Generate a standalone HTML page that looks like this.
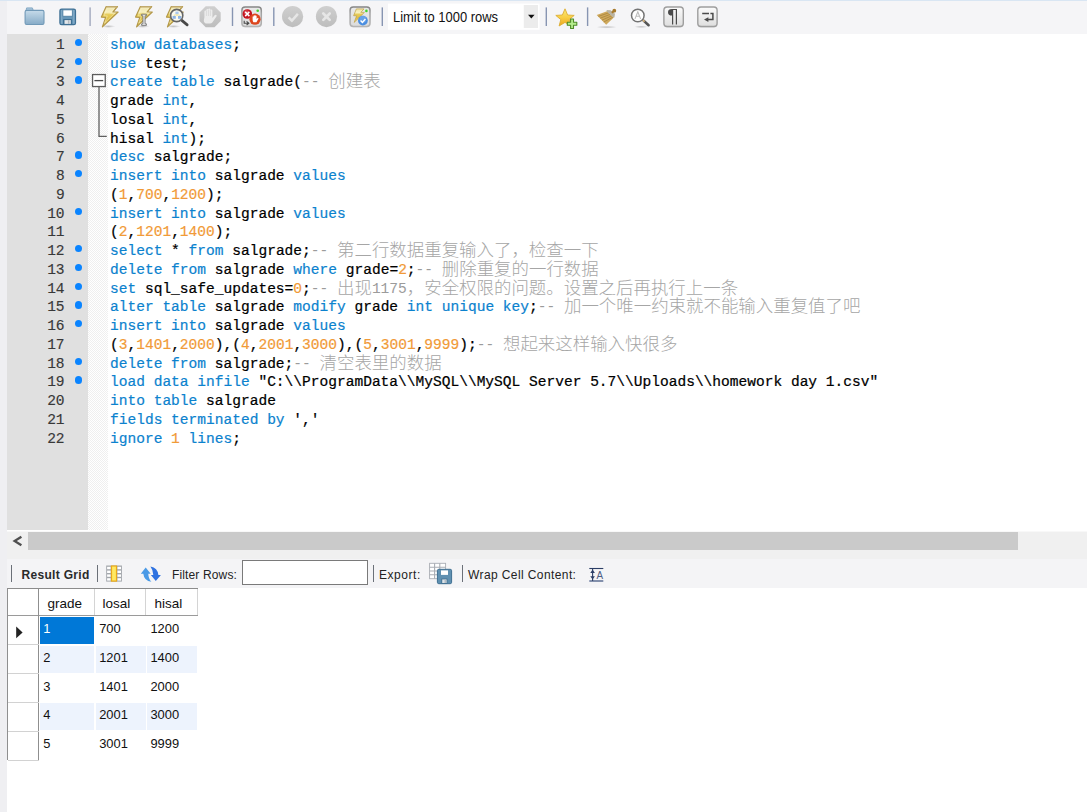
<!DOCTYPE html>
<html lang="zh"><head><meta charset="utf-8"><title>MySQL Workbench</title>
<style>
html,body{margin:0;padding:0}
body{width:1087px;height:812px;position:relative;overflow:hidden;background:#fff;font-family:"Liberation Sans","Noto Sans CJK SC",sans-serif;}
.abs{position:absolute}
#strip{left:0;top:0;width:7px;height:812px;background:#efeff2}
#tb{left:7px;top:0;width:1080px;height:34px;background:#f5f5f7}
#topline{left:0;top:0;width:1087px;height:1px;background:#d9e6f3}
#gutter{left:7px;top:34px;width:81px;height:496px;background:#e0e0e0}
#fold{left:88px;top:34px;width:20px;height:496px;background:#f7f7f7;background-image:conic-gradient(#fff 25%,#efefef 0 50%,#fff 0 75%,#efefef 0);background-size:2px 2px}
.ln{position:absolute;left:0;height:18.75px;line-height:18.75px;width:1087px;font-family:"Liberation Mono","Noto Sans CJK SC",monospace;font-size:14.56px;white-space:pre;color:#000}
.ln .no{position:absolute;right:1022.4px;top:1.8px;font-weight:normal;color:#383838;-webkit-text-stroke:0.15px #383838}
.ln .dot{position:absolute;left:74.8px;top:4.9px;width:7.3px;height:7.3px;border-radius:50%;background:#0a84ff}
.ln .code{position:absolute;left:110px;top:1.8px}
.k{color:#0b82ce;-webkit-text-stroke:0.2px #0b82ce}.i,.p,.s{color:#000;-webkit-text-stroke:0.22px #000}.n{color:#f19a37;-webkit-text-stroke:0.2px #f19a37}.c{color:#9b9b9b}
.z{color:#a6a6a6;font-size:17.45px;line-height:0;position:relative;top:1px;font-family:"Liberation Mono","Noto Sans CJK SC",monospace;font-weight:300}
#hs{left:7px;top:531px;width:1080px;height:28px;background:#f0f0f0;border-top:0.5px solid #f8f8f8}
#thumb{left:28.3px;top:531.8px;width:989.5px;height:18.2px;background:#cacaca}
#rt{left:7px;top:559px;width:1080px;height:29px;background:#f4f4f6}
.sep{position:absolute;width:1.4px;background:#8a97b3;top:7.4px;height:18.6px}
.rsep{position:absolute;width:1.2px;background:#6b7078;top:565px;height:17px}
.rl{position:absolute;top:566.8px;height:17px;line-height:17px;font-size:12px;color:#222;white-space:pre}
#limit{left:393px;top:5.1px;height:25px;line-height:25px;font-size:14.4px;color:#111;white-space:pre;transform-origin:0 50%;transform:scaleX(0.9)}
.gh{position:absolute;top:591px;height:26px;line-height:26px;font-size:13.5px;color:#111;white-space:pre}
.gc{position:absolute;height:27px;line-height:24.4px;font-size:12.9px;color:#111;white-space:pre;box-sizing:border-box;padding-left:3.4px}
</style></head><body>
<div id="strip" class="abs"></div>
<div id="tb" class="abs"></div>
<div id="topline" class="abs"></div>
<svg class="abs" style="left:0;top:0" width="1087" height="34" viewBox="0 0 1087 34">
<defs>
<linearGradient id="gFold" x1="0" y1="0" x2="0" y2="1"><stop offset="0" stop-color="#c6dbea"/><stop offset="1" stop-color="#86abc7"/></linearGradient>
<linearGradient id="gFlop" x1="0" y1="0" x2="0" y2="1"><stop offset="0" stop-color="#5f92b4"/><stop offset="1" stop-color="#47779a"/></linearGradient>
<linearGradient id="gBolt" x1="0" y1="0" x2="0" y2="1"><stop offset="0" stop-color="#efe3a6"/><stop offset="0.28" stop-color="#f7f0c0"/><stop offset="0.4" stop-color="#e6cb58"/><stop offset="0.65" stop-color="#dfbf46"/><stop offset="1" stop-color="#efdc86"/></linearGradient>
<linearGradient id="gBtn" x1="0" y1="0" x2="0" y2="1"><stop offset="0" stop-color="#fbfbfb"/><stop offset="1" stop-color="#dedede"/></linearGradient>
<linearGradient id="gBtnD" x1="0" y1="0" x2="0" y2="1"><stop offset="0" stop-color="#e9e9e9"/><stop offset="1" stop-color="#dcdcdc"/></linearGradient>
<linearGradient id="gBtnS" x1="0" y1="0" x2="0" y2="1"><stop offset="0" stop-color="#858585"/><stop offset="0.35" stop-color="#a4a4a4"/><stop offset="1" stop-color="#b4b4b4"/></linearGradient>
<linearGradient id="gGray" x1="0" y1="0" x2="0" y2="1"><stop offset="0" stop-color="#cfcfcf"/><stop offset="1" stop-color="#bdbdbd"/></linearGradient>
<linearGradient id="gStar" x1="0" y1="0" x2="0" y2="1"><stop offset="0" stop-color="#fbe97a"/><stop offset="0.5" stop-color="#f8cf45"/><stop offset="1" stop-color="#eea51c"/></linearGradient>
<radialGradient id="gShadow"><stop offset="0" stop-color="#000" stop-opacity="0.22"/><stop offset="1" stop-color="#000" stop-opacity="0"/></radialGradient>
<g id="bolt"><ellipse cx="108.4" cy="26.4" rx="7" ry="1.5" fill="url(#gShadow)"/><path d="M106.2 6.5 L117.5 6.5 L112.9 12 L118.1 12 L102.4 26.9 L105.7 17.3 L101.4 17.1 Z" fill="url(#gBolt)" stroke="#b39849" stroke-width="1.2" stroke-linejoin="round"/><path d="M106.4 6.9 L117.2 6.9" stroke="#c4ae74" stroke-width="1.5"/><path d="M107.3 8.2 L114.6 8.2 L110.4 13.2 L114.8 13.2 L104.6 23 L107.3 15.9 L104 15.8 Z" fill="none" stroke="#fbf6d2" stroke-width="0.6" stroke-linejoin="round" opacity="0.7"/></g>
</defs>
<!-- folder -->
<path d="M26 10.6 L26.6 7.9 L32.4 7.9 L33.3 10.6 Z" fill="#a9c6dc" stroke="#7fa5c2" stroke-width="0.9"/>
<rect x="25.1" y="10.4" width="18.9" height="14.1" rx="1.6" fill="url(#gFold)" stroke="#7199b7" stroke-width="1.1"/>
<!-- floppy -->
<rect x="59.9" y="9.1" width="15.6" height="15.6" rx="1.7" fill="#6797b8" stroke="#3f7094" stroke-width="1.2"/>
<rect x="60.9" y="10" width="1.5" height="13.8" fill="#86adc8" opacity=".8"/><rect x="73" y="10" width="1.5" height="13.8" fill="#86adc8" opacity=".8"/>
<rect x="62.9" y="9.9" width="9.4" height="6.3" fill="#fff" stroke="#4f7fa1" stroke-width="0.8"/>
<rect x="63" y="19" width="9.1" height="6" rx="0.8" fill="#3f7094"/>
<rect x="64.5" y="20.1" width="6.3" height="3.8" fill="#e4e7ea"/><rect x="67.9" y="20.1" width="1.5" height="3.8" fill="#b5bcc2"/>
<!-- separators -->
<rect x="89.4" y="7.4" width="1.4" height="18.6" fill="#a2aabd"/>
<rect x="231.8" y="7.4" width="1.4" height="18.6" fill="#8795b2"/>
<rect x="273.1" y="7.4" width="1.4" height="18.6" fill="#8795b2"/>
<rect x="381.6" y="7.4" width="1.4" height="18.6" fill="#8795b2"/>
<rect x="545.6" y="7.4" width="1.4" height="18.6" fill="#8795b2"/>
<rect x="586.9" y="7.4" width="1.4" height="18.6" fill="#8795b2"/>
<!-- bolts -->
<use href="#bolt"/>
<use href="#bolt" x="34.2"/>
<!-- I-beam on bolt 2 -->
<path d="M141.6 14.2 h4.8 v1.6 h-1.3 v8 h1.3 v1.6 h-4.8 v-1.6 h1.3 v-8 h-1.3 Z" fill="#e6e6e6" stroke="#6b6b6b" stroke-width="0.8"/>
<use href="#bolt" x="65.1"/>
<!-- magnifier on bolt 3 -->
<line x1="181.8" y1="20.4" x2="187.2" y2="24.9" stroke="#484848" stroke-width="2.7" stroke-linecap="round"/>
<circle cx="176.7" cy="15.5" r="6.1" fill="#fbfaf0" stroke="#666" stroke-width="1.6"/>
<rect x="175.4" y="11.6" width="3.2" height="2.6" fill="#a9c8ee"/><rect x="172.6" y="16" width="3.2" height="2.8" fill="#8db4e6"/><rect x="178" y="16" width="3.2" height="2.8" fill="#8db4e6"/>
<path d="M177 14 V16 M174.2 16 V15 H179.6 V16" fill="none" stroke="#e9dd9a" stroke-width="0.8"/>
<!-- stop (disabled) -->
<path d="M205.7 6.2 h8.8 l6.2 6.2 v8.6 l-6.2 6.2 h-8.8 l-6.2 -6.2 v-8.6 Z" fill="url(#gGray)"/>
<path d="M204.4 17.6 v-6 q0-1 1-1 t1 1 v-1.6 q0-1 1-1 t1 1 v-.6 q0-1 1-1 t1 1 v1 q0-1 1-1 t1 1 v7.6 l2.2-2.8 q.8-.9 1.7-.3 t.1 1.7 l-3.9 5.7 q-1 1.3 -2.7 1.3 h-2.6 q-3.4 0 -3.4 -3.4 Z" fill="#ececec"/><path d="M206.4 11 v5 M208.4 10 v6 M210.4 10.4 v5.6" stroke="#c9c9c9" stroke-width="0.5"/>
<!-- toggle: stop on error -->
<rect x="241.9" y="7.9" width="19.4" height="19.4" rx="3.2" fill="#d9d9d9" opacity="0.7"/><rect x="241.9" y="7" width="19.4" height="19.4" rx="3.2" fill="url(#gBtnD)" stroke="url(#gBtnS)" stroke-width="1.5"/>
<path d="M244.2 20.8 v2.4 h3.6 M246.6 21.4 l2.2 1.8 l-2.2 1.8" fill="none" stroke="#4a4a4a" stroke-width="1.1"/>
<circle cx="247.3" cy="14" r="4.8" fill="#c4141f"/><circle cx="246.4" cy="12.6" r="2.4" fill="#e8606a" opacity=".6"/>
<path d="M245.2 11.9 l4.2 4.2 M249.4 11.9 l-4.2 4.2" stroke="#fff" stroke-width="1.5"/>
<circle cx="255" cy="19.2" r="5.6" fill="#dd451d"/>
<path d="M252.6 19.4 v-3 h1 v-.8 h1 v-.4 h1 v.6 h1 v3.2 l1.2-1.2 l.8 .8 l-2.2 3.6 h-3 q-0.8 -1.2 -.8 -2.8 Z" fill="#fff"/>
<circle cx="257.7" cy="10.8" r="1.3" fill="#3fd12c"/>
<!-- check / cancel disabled -->
<circle cx="292.6" cy="16.6" r="10.6" fill="url(#gGray)"/>
<path d="M288.6 17.3 l3.3 3.3 l6 -6.8" fill="none" stroke="#e6e6e6" stroke-width="2.5"/>
<circle cx="326.5" cy="16.6" r="10.6" fill="url(#gGray)"/>
<path d="M323.3 13.5 l6.4 6.4 M329.7 13.5 l-6.4 6.4" fill="none" stroke="#e6e6e6" stroke-width="2.7" stroke-linecap="round"/>
<!-- toggle: autocommit -->
<rect x="350.1" y="7.9" width="19.9" height="19.4" rx="3.2" fill="#d9d9d9" opacity="0.7"/><rect x="350.1" y="7" width="19.9" height="19.4" rx="3.2" fill="url(#gBtnD)" stroke="url(#gBtnS)" stroke-width="1.5"/>
<path d="M356.4 8.9 L364 8.9 L360.8 12.4 L364.4 12.4 L354.2 22.4 L356.6 15.8 L353.6 15.7 Z" fill="url(#gBolt)" stroke="#c0a043" stroke-width="0.7" stroke-linejoin="round"/>
<circle cx="362.9" cy="20.6" r="4.9" fill="#4b8ee0"/><circle cx="362.9" cy="19.2" r="3.4" fill="#7fb0ee" opacity=".55"/>
<path d="M360.6 20.6 l1.8 1.8 l3 -3.4" fill="none" stroke="#fff" stroke-width="1.4"/>
<circle cx="366.4" cy="10.9" r="1.3" fill="#3fd12c"/>
<!-- dropdown -->
<rect x="388" y="3.6" width="151.6" height="26.2" fill="#fff"/>
<rect x="523.8" y="5" width="14.2" height="23" fill="#ececec"/>
<path d="M528 14.8 h6.6 l-3.3 3.6 Z" fill="#111"/>
<!-- star -->
<path d="M565 8.8 L567.6 15 L574.2 15.4 L569.2 19.6 L570.9 26 L565 22.4 L559.1 26 L560.8 19.6 L555.8 15.4 L562.4 15 Z" fill="url(#gStar)" stroke="#dcae33" stroke-width="0.9" stroke-linejoin="round"/>
<path d="M570.6 19 h2.9 v3.3 h3.3 v2.9 h-3.3 v3.3 h-2.9 v-3.3 h-3.3 v-2.9 h3.3 Z" fill="#b4ec8c" stroke="#4f8c2a" stroke-width="1.1" stroke-linejoin="round"/>
<!-- broom -->
<ellipse cx="606.6" cy="27.1" rx="10.5" ry="1.5" fill="url(#gShadow)"/>
<path d="M596.7 15.1 L607 11.2 L613.8 17.4 L606.2 24.8 Z" fill="#cfa95c"/>
<path d="M598.4 16.4 L608.8 12.8 M600.2 18.2 L610.4 14.3 M602 20.1 L611.8 15.8 M603.8 22 L612.8 17.2" stroke="#a8843d" stroke-width="0.8"/>
<path d="M606.6 10 L610.6 10.2 L615 13.8 L614.4 17.4 L613.4 17.6 L606.8 11.4 Z" fill="#b9b3a2"/>
<circle cx="614.3" cy="10.7" r="1.9" fill="#a77a2c"/>
<path d="M611.8 12.8 L614.3 10.7" stroke="#a77a2c" stroke-width="2"/>
<!-- search -->
<ellipse cx="641" cy="26.8" rx="7" ry="1.3" fill="url(#gShadow)"/>
<line x1="643.6" y1="20.6" x2="648.6" y2="25.2" stroke="#555" stroke-width="2.6" stroke-linecap="round"/>
<line x1="642.6" y1="19.8" x2="644.6" y2="21.6" stroke="#d5b27a" stroke-width="1.8"/>
<circle cx="637.8" cy="15.5" r="6.3" fill="#fff" stroke="#737373" stroke-width="1.5"/>
<path d="M635 18.9 L637.8 11.7 L640.6 18.9 M636 16.3 H639.6" fill="none" stroke="#bdbdbd" stroke-width="1.1"/>
<!-- pilcrow button -->
<rect x="663.9" y="8" width="19.4" height="19.5" rx="3.2" fill="#cfcfcf" opacity="0.8"/><rect x="663.9" y="7" width="19.4" height="19.5" rx="3.2" fill="url(#gBtn)" stroke="#9e9e9e" stroke-width="1.4"/>
<path d="M677 8.9 V24.6 H675.8 V10 H673.2 V24.6 H672 V15.6 Q668 15.6 668 12.2 Q668 8.9 672 8.9 Z" fill="#4a4a4a"/>
<!-- wrap button -->
<rect x="697.8" y="8" width="19.3" height="19.5" rx="3.2" fill="#cfcfcf" opacity="0.8"/><rect x="697.8" y="7" width="19.3" height="19.5" rx="3.2" fill="url(#gBtn)" stroke="#9e9e9e" stroke-width="1.4"/>
<path d="M702.2 13.6 H709 M710.4 13.6 H712.9 V19.6 H707.6" fill="none" stroke="#4a4a4a" stroke-width="1.5"/>
<path d="M704 19.6 L708.4 17.2 V22 Z" fill="#4a4a4a"/>
</svg>
<div class="abs" id="limit">Limit to 1000 rows</div>

<div id="gutter" class="abs"></div>
<div id="fold" class="abs"></div>
<svg class="abs" style="left:88px;top:70px" width="22" height="72" viewBox="88 70 22 72">
<path d="M99 87 V136.4 H106.8" fill="none" stroke="#606060" stroke-width="1.3"/>
<rect x="92.55" y="74.55" width="12.7" height="12" fill="#fff" stroke="#5c5c5c" stroke-width="1.3"/>
<path d="M94.4 80.6 H103.2" stroke="#4a4a4a" stroke-width="1.3"/>
</svg>
<div class="ln" style="top:34.00px"><b class="no">1</b><i class="dot"></i><span class="code"><span class="k">show databases</span><span class="p">;</span></span></div>
<div class="ln" style="top:52.75px"><b class="no">2</b><i class="dot"></i><span class="code"><span class="k">use </span><span class="i">test</span><span class="p">;</span></span></div>
<div class="ln" style="top:71.50px"><b class="no">3</b><i class="dot"></i><span class="code"><span class="k">create table </span><span class="i">salgrade(</span><span class="c">-- </span><span class="z">创建表</span></span></div>
<div class="ln" style="top:90.25px"><b class="no">4</b><span class="code"><span class="i">grade </span><span class="k">int</span><span class="p">,</span></span></div>
<div class="ln" style="top:109.00px"><b class="no">5</b><span class="code"><span class="i">losal </span><span class="k">int</span><span class="p">,</span></span></div>
<div class="ln" style="top:127.75px"><b class="no">6</b><span class="code"><span class="i">hisal </span><span class="k">int</span><span class="p">);</span></span></div>
<div class="ln" style="top:146.50px"><b class="no">7</b><i class="dot"></i><span class="code"><span class="k">desc </span><span class="i">salgrade;</span></span></div>
<div class="ln" style="top:165.25px"><b class="no">8</b><i class="dot"></i><span class="code"><span class="k">insert into </span><span class="i">salgrade </span><span class="k">values</span></span></div>
<div class="ln" style="top:184.00px"><b class="no">9</b><span class="code"><span class="p">(</span><span class="n">1</span><span class="p">,</span><span class="n">700</span><span class="p">,</span><span class="n">1200</span><span class="p">);</span></span></div>
<div class="ln" style="top:202.75px"><b class="no">10</b><i class="dot"></i><span class="code"><span class="k">insert into </span><span class="i">salgrade </span><span class="k">values</span></span></div>
<div class="ln" style="top:221.50px"><b class="no">11</b><span class="code"><span class="p">(</span><span class="n">2</span><span class="p">,</span><span class="n">1201</span><span class="p">,</span><span class="n">1400</span><span class="p">);</span></span></div>
<div class="ln" style="top:240.25px"><b class="no">12</b><i class="dot"></i><span class="code"><span class="k">select </span><span class="p">* </span><span class="k">from </span><span class="i">salgrade;</span><span class="c">-- </span><span class="z">第二行数据重复输入了，检查一下</span></span></div>
<div class="ln" style="top:259.00px"><b class="no">13</b><i class="dot"></i><span class="code"><span class="k">delete from </span><span class="i">salgrade </span><span class="k">where </span><span class="i">grade=</span><span class="n">2</span><span class="p">;</span><span class="c">-- </span><span class="z">删除重复的一行数据</span></span></div>
<div class="ln" style="top:277.75px"><b class="no">14</b><i class="dot"></i><span class="code"><span class="k">set </span><span class="i">sql_safe_updates=</span><span class="n">0</span><span class="p">;</span><span class="c">-- </span><span class="z">出现</span><span class="c">1175</span><span class="z">，安全权限的问题。设置之后再执行上一条</span></span></div>
<div class="ln" style="top:296.50px"><b class="no">15</b><i class="dot"></i><span class="code"><span class="k">alter table </span><span class="i">salgrade </span><span class="k">modify </span><span class="i">grade </span><span class="k">int unique key</span><span class="p">;</span><span class="c">-- </span><span class="z">加一个唯一约束就不能输入重复值了吧</span></span></div>
<div class="ln" style="top:315.25px"><b class="no">16</b><i class="dot"></i><span class="code"><span class="k">insert into </span><span class="i">salgrade </span><span class="k">values</span></span></div>
<div class="ln" style="top:334.00px"><b class="no">17</b><span class="code"><span class="p">(</span><span class="n">3</span><span class="p">,</span><span class="n">1401</span><span class="p">,</span><span class="n">2000</span><span class="p">),(</span><span class="n">4</span><span class="p">,</span><span class="n">2001</span><span class="p">,</span><span class="n">3000</span><span class="p">),(</span><span class="n">5</span><span class="p">,</span><span class="n">3001</span><span class="p">,</span><span class="n">9999</span><span class="p">);</span><span class="c">-- </span><span class="z">想起来这样输入快很多</span></span></div>
<div class="ln" style="top:352.75px"><b class="no">18</b><i class="dot"></i><span class="code"><span class="k">delete from </span><span class="i">salgrade;</span><span class="c">-- </span><span class="z">清空表里的数据</span></span></div>
<div class="ln" style="top:371.50px"><b class="no">19</b><i class="dot"></i><span class="code"><span class="k">load data infile </span><span class="s">"C:\\ProgramData\\MySQL\\MySQL Server 5.7\\Uploads\\homework day 1.csv"</span></span></div>
<div class="ln" style="top:390.25px"><b class="no">20</b><span class="code"><span class="k">into table </span><span class="i">salgrade</span></span></div>
<div class="ln" style="top:409.00px"><b class="no">21</b><span class="code"><span class="k">fields terminated by </span><span class="s">','</span></span></div>
<div class="ln" style="top:427.75px"><b class="no">22</b><span class="code"><span class="k">ignore </span><span class="n">1 </span><span class="k">lines</span><span class="p">;</span></span></div>
<div id="hs" class="abs"></div>
<div id="thumb" class="abs"></div>
<svg class="abs" style="left:10.6px;top:535px" width="12" height="12" viewBox="0 0 12 12"><path d="M10.4 1.7 L3.6 6 L10.4 10.3" fill="none" stroke="#505050" stroke-width="2.3"/></svg>
<div id="rt" class="abs"></div>
<div class="rsep" style="left:10.6px"></div>
<div class="rl" style="left:21.4px;font-weight:bold;color:#2a2a2a;letter-spacing:0.33px" id="rg">Result Grid</div>
<div class="rsep" style="left:96.9px"></div>
<svg class="abs" style="left:104px;top:562px" width="60" height="24" viewBox="104 562 60 24">
<rect x="106.2" y="565.5" width="15.7" height="16.1" fill="#a3a7ac"/>
<g fill="#fff"><rect x="107.1" y="566.8" width="3.6" height="2.4"/><rect x="107.1" y="570.6" width="3.6" height="2.4"/><rect x="107.1" y="574.4" width="3.6" height="2.4"/><rect x="107.1" y="578.2" width="3.6" height="2.4"/>
<rect x="117.4" y="566.8" width="3.6" height="2.4"/><rect x="117.4" y="570.6" width="3.6" height="2.4"/><rect x="117.4" y="574.4" width="3.6" height="2.4"/><rect x="117.4" y="578.2" width="3.6" height="2.4"/></g>
<rect x="111.5" y="566" width="5" height="15.1" fill="#ffe962" stroke="#e9a91a" stroke-width="1.2"/>
<path d="M145.7 567.5 L150.7 573.7 L148.3 573.7 Q148.4 578.6 151.4 581.8 Q144.1 580.8 143.3 573.7 L140.8 573.7 Z" fill="#4a9ae6"/>
<path d="M155.8 581.1 L150.9 574.9 L153.3 574.9 Q153.2 570 150.4 566.4 Q157.7 567.8 158.4 574.9 L160.9 574.9 Z" fill="#2f72e0"/>
</svg>
<div class="rl" style="left:172px;letter-spacing:0.14px" id="fr">Filter Rows:</div>
<div class="abs" style="left:242px;top:560px;width:124px;height:23.4px;background:#fff;border:1px solid #7a7a7a"></div>
<div class="rsep" style="left:372.6px"></div>
<div class="rl" style="left:379px;letter-spacing:0.55px" id="ex">Export:</div>
<svg class="abs" style="left:426px;top:561px" width="30" height="26" viewBox="426 561 30 26">
<rect x="429.6" y="563.3" width="16" height="15.4" fill="#fff" stroke="#a9adb4" stroke-width="0.9"/>
<path d="M429.6 567.2 H445.6 M429.6 571 H445.6 M429.6 574.8 H445.6 M434.6 563.3 V578.7 M439.8 563.3 V578.7" stroke="#a9adb4" stroke-width="1.1"/>
<rect x="437.4" y="569.3" width="14.2" height="14.4" rx="1.4" fill="#5f90b1" stroke="#3f6f92" stroke-width="1"/>
<rect x="441" y="570.4" width="7" height="4.5" fill="#fff"/>
<rect x="441.4" y="578.6" width="6" height="5" fill="#416f90"/>
<rect x="442.2" y="579.4" width="4.4" height="3.6" fill="#dde3e8"/><rect x="444.6" y="579.4" width="1.2" height="3.6" fill="#aab4bc"/>
</svg>
<div class="rsep" style="left:461.6px"></div>
<div class="rl" style="left:468px;letter-spacing:0.4px" id="wc">Wrap Cell Content:</div>
<svg class="abs" style="left:586px;top:562px" width="22" height="24" viewBox="586 562 22 24">
<path d="M589.3 568.5 H603.3" stroke="#2c3e66" stroke-width="1.1"/>
<path d="M589.3 581 H603.3" stroke="#66769a" stroke-width="1.6"/>
<path d="M592.6 568.8 V581" stroke="#2c3e66" stroke-width="1.1"/>
<path d="M592.6 569.6 L594.9 573 H590.3 Z M592.6 579.6 L594.9 576.2 H590.3 Z" fill="#2c3e66"/>
<text x="596.6" y="578.8" font-family="Liberation Sans, sans-serif" font-size="11.4" fill="#4d5d84" textLength="6.6" lengthAdjust="spacingAndGlyphs">A</text>
</svg>
<!-- grid -->
<div class="abs" style="left:7px;top:588px;width:191px;height:28px;background:#fff;border-top:1.2px solid #8c8c8c;border-bottom:1.4px solid #9a9a9a;box-sizing:border-box"></div>
<div class="abs" style="left:7px;top:588px;width:1px;height:172px;background:#8f8f8f"></div>
<div class="abs" style="left:38px;top:588px;width:1px;height:172px;background:#8f8f8f"></div>
<div class="abs" style="left:94.2px;top:589px;width:1px;height:26px;background:#d4d4d4"></div>
<div class="abs" style="left:145.4px;top:589px;width:1px;height:26px;background:#d4d4d4"></div>
<div class="abs" style="left:197px;top:589px;width:1px;height:26px;background:#d4d4d4"></div>
<div class="gh" style="left:47.4px">grade</div><div class="gh" style="left:102.6px">losal</div><div class="gh" style="left:154.6px">hisal</div>
<div class="abs" style="left:8px;top:644.3px;width:31px;height:1px;background:#d2d2d2"></div>
<div class="gc" style="left:39.8px;top:617.0px;width:54.6px;background:#0078d7;color:#fff;">1</div>
<div class="gc" style="left:95.8px;top:617.0px;width:49.8px;">700</div>
<div class="gc" style="left:147.0px;top:617.0px;width:50.4px;">1200</div>
<div class="abs" style="left:8px;top:673.1px;width:31px;height:1px;background:#d2d2d2"></div>
<div class="gc" style="left:39.8px;top:645.8px;width:54.6px;background:#edf3fd;">2</div>
<div class="gc" style="left:95.8px;top:645.8px;width:49.8px;background:#edf3fd;">1201</div>
<div class="gc" style="left:147.0px;top:645.8px;width:50.4px;background:#edf3fd;">1400</div>
<div class="abs" style="left:8px;top:701.9px;width:31px;height:1px;background:#d2d2d2"></div>
<div class="gc" style="left:39.8px;top:674.6px;width:54.6px;">3</div>
<div class="gc" style="left:95.8px;top:674.6px;width:49.8px;">1401</div>
<div class="gc" style="left:147.0px;top:674.6px;width:50.4px;">2000</div>
<div class="abs" style="left:8px;top:730.7px;width:31px;height:1px;background:#d2d2d2"></div>
<div class="gc" style="left:39.8px;top:703.4px;width:54.6px;background:#edf3fd;">4</div>
<div class="gc" style="left:95.8px;top:703.4px;width:49.8px;background:#edf3fd;">2001</div>
<div class="gc" style="left:147.0px;top:703.4px;width:50.4px;background:#edf3fd;">3000</div>
<div class="abs" style="left:8px;top:759.5px;width:31px;height:1px;background:#d2d2d2"></div>
<div class="gc" style="left:39.8px;top:732.2px;width:54.6px;">5</div>
<div class="gc" style="left:95.8px;top:732.2px;width:49.8px;">3001</div>
<div class="gc" style="left:147.0px;top:732.2px;width:50.4px;">9999</div>
<svg class="abs" style="left:14px;top:622.6px" width="14" height="20" viewBox="0 0 14 20"><path d="M2.2 3.6 L8.6 9.4 L2.2 15.2 Z" fill="#222"/></svg>

</body></html>
